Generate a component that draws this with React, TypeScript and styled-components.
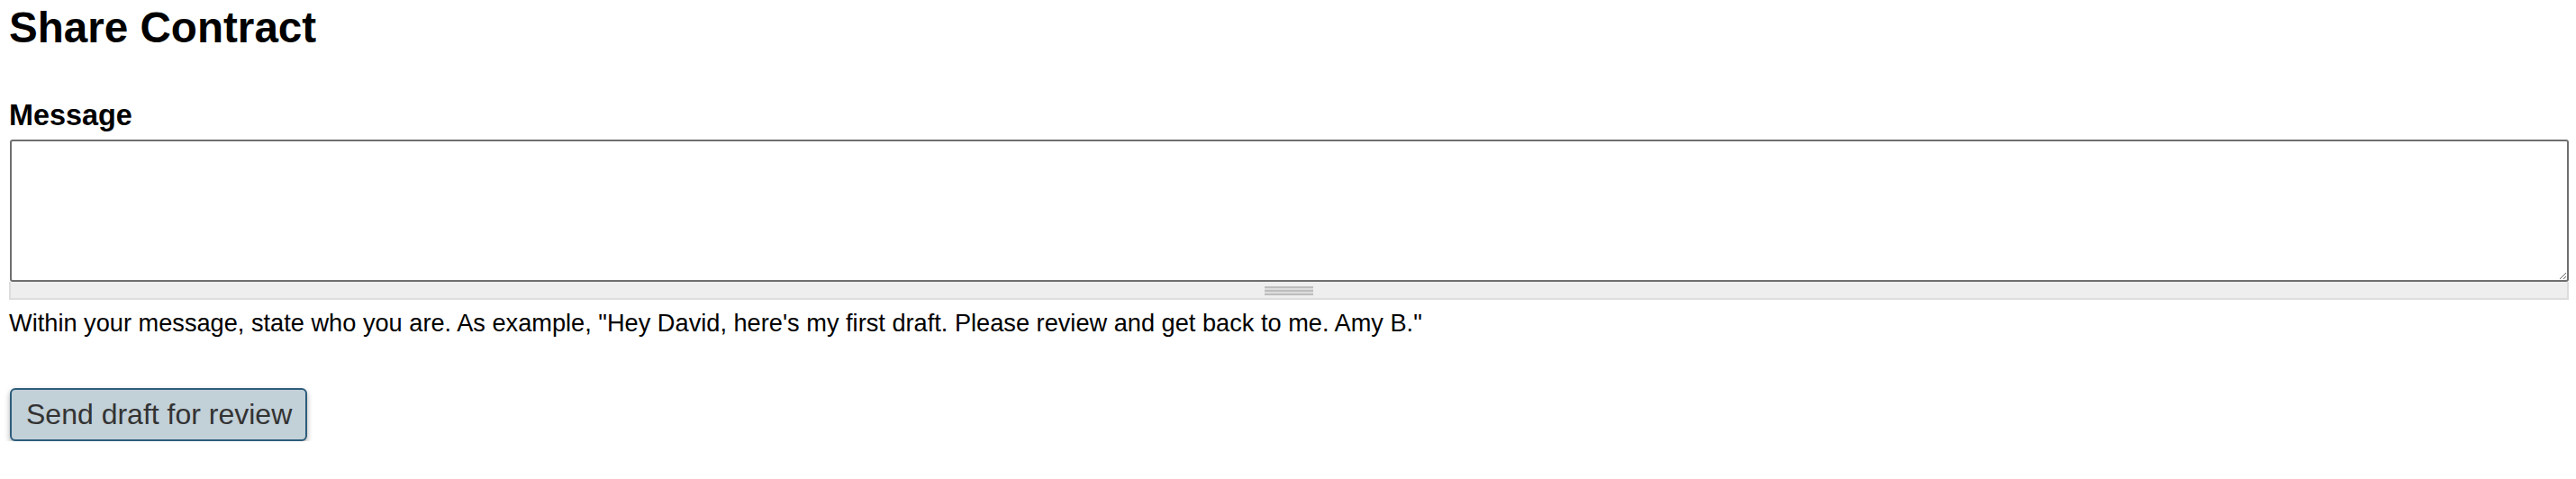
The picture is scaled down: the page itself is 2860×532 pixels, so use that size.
import React from "react";
import styled, { createGlobalStyle } from "styled-components";

const GlobalStyle = createGlobalStyle`
  html, body {
    margin: 0;
    padding: 0;
    background: #ffffff;
  }
  body {
    font-family: "Liberation Sans", Arial, Helvetica, sans-serif;
    color: #000;
  }
`;

const Page = styled.form`
  display: flex;
  flex-direction: column;
  padding: 3px 8px 0 10px;
`;

const Title = styled.h1`
  margin: 0;
  font-size: 47.6px;
  line-height: 56px;
  font-weight: 700;
`;

const Field = styled.div`
  display: flex;
  flex-direction: column;
  margin-top: 51px;
`;

const Label = styled.label`
  font-size: 32.4px;
  line-height: 37px;
  font-weight: 700;
  margin-bottom: 8px;
`;

const TextAreaWrap = styled.div`
  display: flex;
  flex-direction: column;
`;

const MessageBox = styled.textarea`
  display: block;
  box-sizing: border-box;
  width: calc(100% - 1px);
  margin: 0 0 0 1px;
  height: 158px;
  border: 2px solid #6f6f6f;
  border-radius: 3px;
  padding: 4px;
  font-family: "Liberation Mono", monospace;
  font-size: 26px;
  background: #fff;
  resize: vertical;
  outline: none;
`;

const Grippie = styled.div`
  box-sizing: border-box;
  height: 20px;
  background-color: #eeeeee;
  border: 2px solid #dddddd;
  border-top-width: 0;
  cursor: s-resize;
  background-image: repeating-linear-gradient(
    to bottom,
    #bdbdbd 0 2px,
    #dcdcdc 2px 4px
  );
  background-size: 54px 10px;
  background-repeat: no-repeat;
  background-position: center 5px;
`;

const Help = styled.div`
  margin-top: 10px;
  font-size: 27.2px;
  line-height: 31px;
  color: #000;
`;

const Actions = styled.div`
  display: flex;
  margin-top: 57px;
`;

const SubmitButton = styled.button`
  box-sizing: border-box;
  margin: 0 0 0 1px;
  font-family: "Liberation Sans", Arial, Helvetica, sans-serif;
  font-size: 32px;
  line-height: 37px;
  color: #333333;
  background: #c2d0d8;
  border: 2px solid #2d5d7b;
  border-radius: 6px;
  padding: 9px 15px 9px 16px;
  box-shadow: 0 3px 6px rgba(0, 0, 0, 0.32);
  cursor: pointer;
`;

export default function App() {
  return (
    <>
      <GlobalStyle />
      <Page onSubmit={(e) => e.preventDefault()}>
        <Title>Share Contract</Title>
        <Field>
          <Label htmlFor="message">Message</Label>
          <TextAreaWrap>
            <MessageBox id="message" />
            <Grippie />
          </TextAreaWrap>
          <Help>
            Within your message, state who you are. As example, "Hey David,
            here's my first draft. Please review and get back to me. Amy B."
          </Help>
        </Field>
        <Actions>
          <SubmitButton type="submit">Send draft for review</SubmitButton>
        </Actions>
      </Page>
    </>
  );
}
